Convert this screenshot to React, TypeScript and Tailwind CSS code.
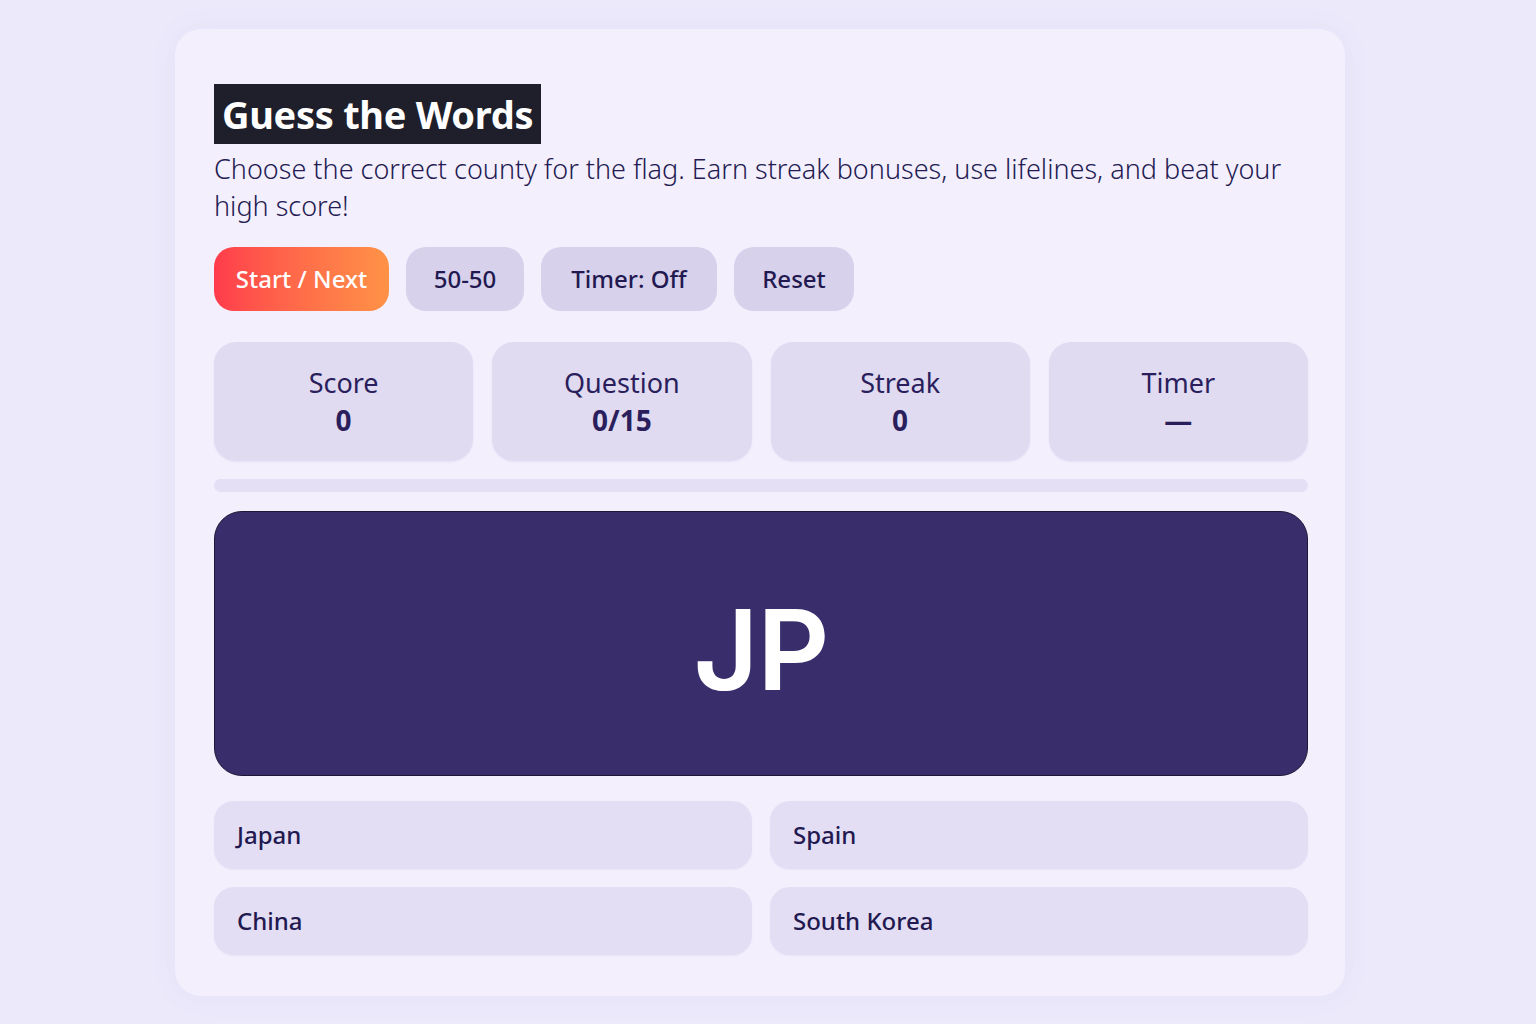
const stats = [
  { label: "Score", value: "0" },
  { label: "Question", value: "0/15" },
  { label: "Streak", value: "0" },
  { label: "Timer", value: "—" },
];

const options = ["Japan", "Spain", "China", "South Korea"];

export default function App() {
  return (
    <div
      className="min-h-screen bg-[#ece9fb] pt-[29px] pb-[28px]"
      style={{ fontFamily: '"Noto Sans", "Open Sans", sans-serif' }}
    >
      <main className="ml-[175px] w-[1170px] rounded-[26px] bg-[#f3effd] pl-[39px] pr-[37px] pt-[55px] pb-[41px] shadow-[0_0_30px_rgba(120,100,200,0.06)]">
        <h1 className="inline-block bg-[#1e1f2b] px-[8px] text-[38px] font-bold leading-[60px] tracking-[-0.3px] text-white">
          Guess the Words
        </h1>
        <p className="mt-[6px] text-[27px] font-light leading-[37px] text-[#241b52]">
          Choose the correct county for the flag. Earn streak bonuses, use lifelines, and beat your high score!
        </p>

        <div className="mt-[23px] flex gap-[17px]">
          <button className="h-[64px] w-[175px] rounded-[20px] bg-gradient-to-r from-[#ff3b4b] to-[#ff9246] text-[24px] font-medium text-white">
            Start / Next
          </button>
          <button className="h-[64px] w-[118px] rounded-[20px] bg-[#d7d1ec] text-[24px] font-medium text-[#221950]">
            50-50
          </button>
          <button className="h-[64px] w-[176px] rounded-[20px] bg-[#d7d1ec] text-[24px] font-medium text-[#221950]">
            Timer: Off
          </button>
          <button className="h-[64px] w-[120px] rounded-[20px] bg-[#d7d1ec] text-[24px] font-medium text-[#221950]">
            Reset
          </button>
        </div>

        <div className="mt-[31px] grid grid-cols-4 gap-[19px]">
          {stats.map((s) => (
            <div
              key={s.label}
              className="flex h-[119px] flex-col items-center justify-center rounded-[22px] bg-[#e0dbf1] shadow-[0_1px_2px_rgba(80,60,160,0.08)]"
            >
              <span className="text-[27px] leading-[36px] text-[#2a1f5c]">{s.label}</span>
              <span className="text-[28px] font-bold leading-[38px] text-[#2a1f5c]">{s.value}</span>
            </div>
          ))}
        </div>

        <div className="mt-[18px] h-[13px] w-full rounded-full bg-[#e4dff4]" />

        <div className="mt-[19px] flex h-[265px] items-center justify-center rounded-[28px] border border-[#1d1838] bg-[#392e6b]">
          <span
            className="pt-[10px] text-[112px] font-semibold leading-none tracking-[-1px] text-white"
            style={{ fontFamily: 'Inter, "Noto Sans", sans-serif' }}
          >
            JP
          </span>
        </div>

        <div className="mt-[25px] grid grid-cols-2 gap-x-[18px] gap-y-[18px]">
          {options.map((o) => (
            <button
              key={o}
              className="h-[68px] rounded-[20px] bg-[#e3def4] pl-[23px] text-left text-[24px] font-medium text-[#221950] shadow-[0_1px_2px_rgba(80,60,160,0.06)]"
            >
              {o}
            </button>
          ))}
        </div>
      </main>
    </div>
  );
}
